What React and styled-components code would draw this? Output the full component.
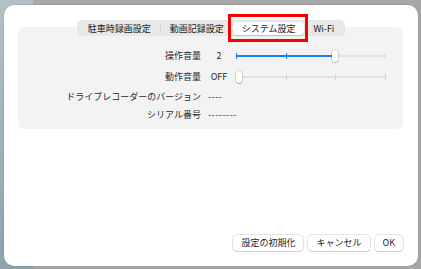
import React from 'react';
import styled, { createGlobalStyle } from 'styled-components';

const GlobalStyle = createGlobalStyle`
  html, body {
    margin: 0;
    padding: 0;
  }
  body {
    font-family: "Noto Sans CJK JP", "Noto Sans", sans-serif;
    color: #2a2a2a;
  }
`;

const tabs = ['駐車時録画設定', '動画記録設定', 'システム設定', 'Wi-Fi'];

const App = () => {
  const active = 2;

  return (
    <Backdrop>
      <GlobalStyle />
      <Dialog>
        <TabsRow>
          <TabBar>
            {tabs.map((t, i) => (
              <Tab key={t} $active={i === active} $divider={i === 0}>
                {t}
                {i === active && <Highlight />}
              </Tab>
            ))}
          </TabBar>
        </TabsRow>

        <Panel>
          <Row $h={21}>
            <Label>操作音量</Label>
            <SliderValue>2</SliderValue>
            <Slider value={2} max={3} />
          </Row>
          <Row $h={21}>
            <Label>動作音量</Label>
            <SliderValue>OFF</SliderValue>
            <Slider value={0} max={3} />
          </Row>
          <Row $h={18}>
            <Label>ドライブレコーダーのバージョン</Label>
            <Value>----</Value>
          </Row>
          <Row $h={18}>
            <Label>シリアル番号</Label>
            <Value>--------</Value>
          </Row>
        </Panel>

        <Footer>
          <Button>設定の初期化</Button>
          <Button>キャンセル</Button>
          <Button>OK</Button>
        </Footer>
      </Dialog>
    </Backdrop>
  );
};

const TRACK = 150;
const THUMB = 6;

const Slider = ({ value, max }) => {
  const center = THUMB / 2 + (value * (TRACK - THUMB)) / max;
  return (
    <Track>
      <Fill style={{ width: center }} />
      {Array.from({ length: max + 1 }).map((_, i) => {
        const x = Math.min(TRACK - 1, Math.round((i * (TRACK - 1)) / max));
        return <Tick key={i} $on={x <= center && value > 0} style={{ left: x }} />;
      })}
      <Thumb style={{ left: center - THUMB / 2 }} />
    </Track>
  );
};

// Styled components

const Backdrop = styled.div`
  min-height: 269px;
  padding: 5px 3px 3px 4px;
  box-sizing: border-box;
  display: flex;
  background:
    linear-gradient(to right, transparent 33px, #a7a7a7 33px),
    linear-gradient(#b4c0c5, #8ea3ad);
`;

const Dialog = styled.div`
  flex: 1;
  height: 261px;
  background: #fff;
  border-radius: 10px;
  display: flex;
  flex-direction: column;
  box-shadow: 0 0 0 0.5px rgba(0, 0, 0, 0.12);
`;

const TabsRow = styled.div`
  display: flex;
  justify-content: center;
  padding-top: 15px;
  position: relative;
  z-index: 1;
`;

const TabBar = styled.div`
  display: flex;
  align-items: center;
  height: 16px;
  padding: 0 2px;
  box-sizing: border-box;
  background: #e8e8e8;
  border-radius: 5px;
`;

const Tab = styled.div`
  position: relative;
  height: 13px;
  line-height: 13px;
  padding: 0 9px;
  font-size: 9px;
  color: #222;
  white-space: nowrap;
  border-radius: 4px;
  background: ${(p) => (p.$active ? '#fff' : 'transparent')};
  box-shadow: ${(p) => (p.$active ? '0 0.5px 1px rgba(0,0,0,0.18)' : 'none')};
  border-right: ${(p) => (p.$divider ? '1px solid #d2d2d2' : 'none')};
  ${(p) => p.$divider && 'border-radius: 0; height: 9px; line-height: 9px;'}
`;

const Highlight = styled.span`
  position: absolute;
  top: -8px;
  left: -5px;
  right: -4px;
  bottom: -7px;
  border: 3px solid #f40000;
  pointer-events: none;
`;

const Panel = styled.div`
  margin: -9px 15px 0 14px;
  padding: 18px 0 6px;
  background: #f3f3f3;
  border-radius: 6px;
  display: flex;
  flex-direction: column;
`;

const Row = styled.div`
  display: flex;
  align-items: center;
  height: ${(p) => p.$h}px;
`;

const Label = styled.div`
  width: 183px;
  text-align: right;
  font-size: 9px;
  white-space: nowrap;
`;

const SliderValue = styled.div`
  width: 22px;
  margin-left: 7px;
  margin-right: 6px;
  text-align: center;
  font-size: 9px;
`;

const Value = styled.div`
  margin-left: 7px;
  font-size: 9px;
  letter-spacing: 0.5px;
`;

const Track = styled.div`
  position: relative;
  width: ${TRACK}px;
  height: 2px;
  background: #e2e2e2;
  border-radius: 1px;
`;

const Fill = styled.div`
  position: absolute;
  left: 0;
  top: 0;
  height: 2px;
  background: #1a7df5;
  border-radius: 1px;
`;

const Tick = styled.div`
  position: absolute;
  top: -2px;
  width: 1px;
  height: 6px;
  background: ${(p) => (p.$on ? '#1a7df5' : '#d4d4d4')};
`;

const Thumb = styled.div`
  position: absolute;
  top: -5px;
  width: ${THUMB}px;
  height: 12px;
  background: #fff;
  border-radius: 3px;
  box-shadow: 0 0 0 0.5px rgba(0, 0, 0, 0.2), 0 1px 1.5px rgba(0, 0, 0, 0.2);
`;

const Footer = styled.div`
  margin-top: auto;
  display: flex;
  justify-content: flex-end;
  gap: 5px;
  padding: 0 15px 15px;
`;

const Button = styled.button`
  height: 16px;
  padding: 0 8px;
  font-family: inherit;
  font-size: 9px;
  line-height: 16px;
  color: #262626;
  background: #fff;
  border: none;
  border-radius: 4px;
  box-shadow: 0 0 0 0.5px rgba(0, 0, 0, 0.18), 0 0.5px 1px rgba(0, 0, 0, 0.12);
`;

export default App;
